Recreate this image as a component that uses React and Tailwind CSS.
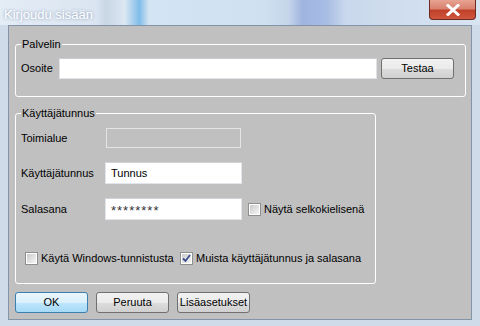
import React from "react";

const font = "font-['Liberation_Sans',Arial,sans-serif]";

const Checkbox = ({ checked }) => (
  <span className="w-[13px] h-[13px] shrink-0 border border-[#8e8f8f] bg-white p-[1px] flex">
    <span className="flex-1 bg-linear-to-br from-[#cbcbcb] to-[#f6f6f6] flex items-center justify-center">
      {checked && (
        <svg width="9" height="9" viewBox="0 0 9 9">
          <path d="M1 4.5 L3.5 7 L8 1" fill="none" stroke="#3d4f8e" strokeWidth="1.8" />
        </svg>
      )}
    </span>
  </span>
);

const Button = ({ children, focused }) => (
  <button
    className={
      "w-[73px] h-[21px] rounded-[3px] border text-[11px] text-black flex items-center justify-center " +
      (focused
        ? "border-[#3c7fb1] bg-[linear-gradient(#eaf6fd_0%,#d9f0fc_50%,#bee6fd_50%,#a7d9f5_100%)]"
        : "border-[#707070] bg-[linear-gradient(#f2f2f2_0%,#ebebeb_50%,#dddddd_50%,#cfcfcf_100%)]")
    }
  >
    {children}
  </button>
);

export default function App() {
  return (
    <div
      className={
        "w-[480px] h-[326px] flex flex-col overflow-hidden bg-[#cfdbe8] text-[11px] text-black " + font
      }
    >
      {/* Title bar */}
      <div className="h-[25px] shrink-0 flex justify-between bg-[linear-gradient(90deg,#e4ecf5_0%,#dae5f1_20%,#c9d6e4_22%,#dce7f2_26%,#7fbde9_29%,#d3e4f3_31%,#cfe0f0_55%,#c6d6ea_60%,#9fb5e0_63%,#a8bde4_68%,#c9d8ec_72%,#d9e4f1_100%)]">
        <span className="pl-[4px] pt-[5px] text-[13px] text-white [text-shadow:0_0_3px_rgba(120,140,170,0.9)]">
          Kirjoudu sisään
        </span>
        <div className="mr-[4px] w-[47px] h-[20px] rounded-b-[4px] border border-t-0 border-[#6d2a22] bg-[linear-gradient(#e8a393_0%,#d9826f_45%,#c0412a_55%,#d0563c_100%)] flex items-center justify-center">
          <svg width="14" height="12" viewBox="0 0 14 12">
            <path
              d="M2 1.5 L12 10.5 M12 1.5 L2 10.5"
              stroke="#ffffff"
              strokeWidth="3"
              strokeLinecap="square"
            />
          </svg>
        </div>
      </div>

      {/* Client area */}
      <div className="flex-1 mx-[8px] mb-[6px] border border-[#8394a8] bg-[#c0c0c0] pl-[6px] pr-[5px] pt-[12px]">
        <fieldset className="border border-white rounded-[3px] pl-[5px] pb-[17px]">
          <legend className="px-[1px] leading-[13px]">Palvelin</legend>
          <div className="flex items-center mt-[7px]">
            <span className="w-[38px]">Osoite</span>
            <input
              className="w-[318px] h-[21px] bg-white border border-[#dfe3e8] border-t-[#c8ccd2] outline-none"
              defaultValue=""
            />
            <span className="ml-[4px]">
              <Button>Testaa</Button>
            </span>
          </div>
        </fieldset>

        <fieldset className="mt-[10px] w-[361px] border border-white rounded-[3px] pl-[5px] pb-[16px]">
          <legend className="px-[1px] leading-[13px]">Käyttäjätunnus</legend>
          <div className="flex items-center mt-[8px]">
            <span className="w-[84px]">Toimialue</span>
            <div className="ml-[1px] w-[135px] h-[20px] border border-[#e4e4e4]" />
          </div>
          <div className="flex items-center mt-[14px]">
            <span className="w-[84px]">Käyttäjätunnus</span>
            <div className="w-[137px] h-[22px] bg-white border border-[#e2e6ea] border-t-[#cfd3d8] flex items-center pl-[5px]">
              Tunnus
            </div>
          </div>
          <div className="flex items-center mt-[14px]">
            <span className="w-[84px]">Salasana</span>
            <div className="w-[137px] h-[22px] bg-white border border-[#e2e6ea] border-t-[#cfd3d8] flex items-center pl-[5px] pt-[3px] text-[13px] tracking-[1px] text-[#333]">
              ********
            </div>
            <span className="ml-[6px] flex items-center gap-[3px]">
              <Checkbox />
              Näytä selkokielisenä
            </span>
          </div>
          <div className="flex items-center mt-[30px] ml-[4px]">
            <span className="w-[155px] flex items-center gap-[3px]">
              <Checkbox />
              Käytä Windows-tunnistusta
            </span>
            <span className="flex items-center gap-[3px]">
              <Checkbox checked />
              Muista käyttäjätunnus ja salasana
            </span>
          </div>
        </fieldset>

        <div className="flex gap-[8px] mt-[8px]">
          <Button focused>OK</Button>
          <Button>Peruuta</Button>
          <Button>Lisäasetukset</Button>
        </div>
      </div>
    </div>
  );
}
